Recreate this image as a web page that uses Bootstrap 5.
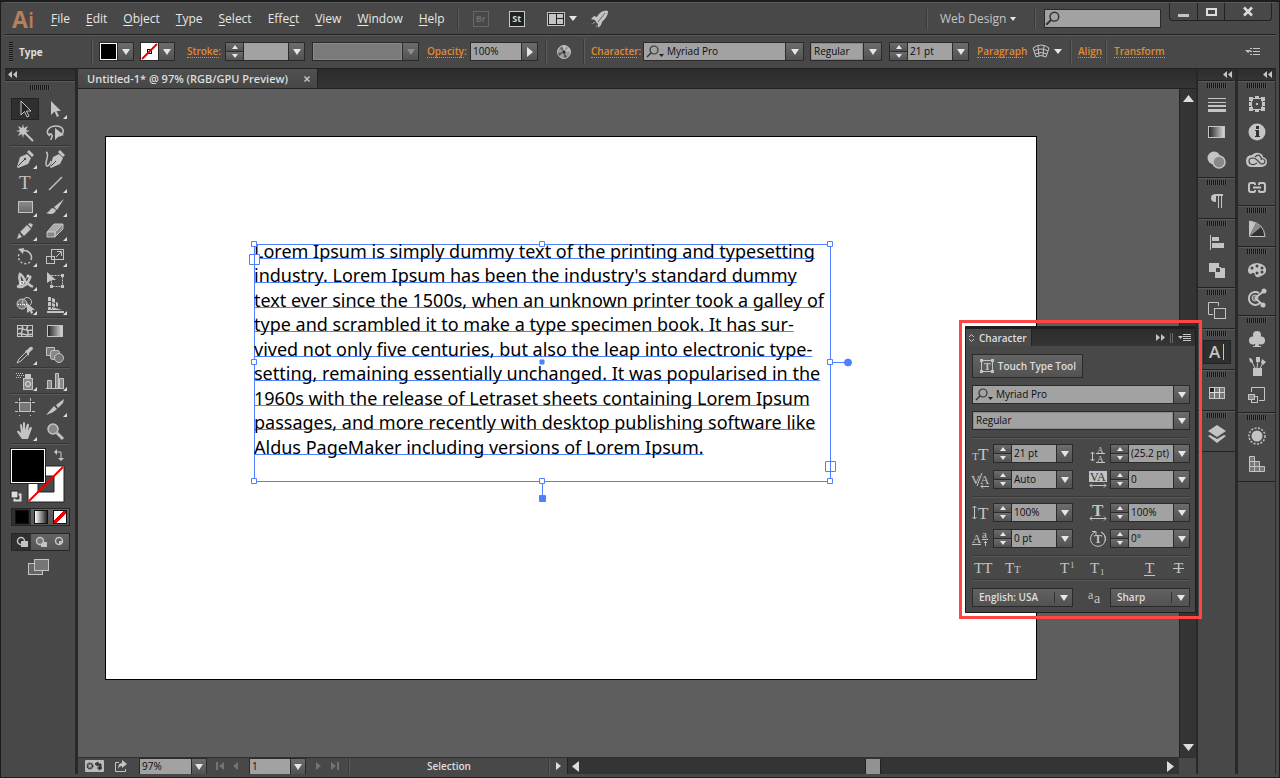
<!DOCTYPE html>
<html lang="en">
<head>
<meta charset="utf-8">
<meta name="viewport" content="width=device-width, initial-scale=1">
<title>Untitled-1 - Illustrator</title>
<link rel="stylesheet" href="https://cdn.jsdelivr.net/npm/bootstrap@5.3.0/dist/css/bootstrap.min.css">
<style>
:root{--ink:#c4c4c4;--line:#2a2a2a;--hi:#5a5a5a;--face:#484848;--field:#a2a2a2;--orange:#e28a2f;--sel:#4f80ff}
body{background:var(--face);color:#dedede;font:10px/14px "Open Sans","Noto Sans",sans-serif;overflow:hidden}
button,input,select{font:inherit;color:inherit;border:0;border-radius:0;padding:0;background:none;min-width:0}
svg{display:block;flex:none}
.ic{fill:none;stroke:var(--ink);stroke-width:1;overflow:visible}
.ic .f,.ic.f{fill:var(--ink);stroke:none}
.ic .d{fill:#8a8a8a}
.ic text{fill:var(--ink);stroke:none;font-family:"Liberation Serif",serif}
.app{border:solid #1c1c1c;border-width:2px 1px 1px 1px;padding:0 3px 3px 4px}
/* menu bar */
.menubar{height:32px;border-top:1px solid var(--hi);padding-left:7px}
.brand{font:700 23px/30px "Open Sans",sans-serif;color:#b67f5c;width:39px}
.brand span{font-weight:600;font-size:22px}
.menus{font-size:12px;gap:16px}
.menus a{color:#e6e6e6;text-decoration:none}
.menus u{text-underline-offset:2px}
.vsep{width:2px;background:#383838;border-right:1px solid #5c5c5c;flex:none}
.menubar .vsep{height:20px}
.appbox{width:16px;height:16px;border:1px solid #c8c8c8;background:#222;font:700 9px/14px "Open Sans",sans-serif;color:#d8d8d8;text-align:center}
.appbox.off{border-color:#666;background:none;color:#6c6c6c}
.workspace{font-size:12px;width:82px;appearance:none;color:#c4c4c4}
.search{width:117px;height:19px;background:var(--field);border:1px solid var(--line)}
.winbtns{border:1px solid #222;border-top:0;border-radius:0 0 4px 4px;height:18px}
.winbtns button{height:17px;border-right:1px solid #222}
.winbtns button:last-child{border:0}
/* control bar */
.control{height:35px;border-top:1px solid #222;border-bottom:1px solid #222;box-shadow:inset 0 1px 0 #5a5a5a}
.control .vsep{height:25px}
.grip-v{width:4px;height:20px;background:repeating-linear-gradient(#161616 0 1px,#555 1px 2px)}
.grip-h{width:20px;height:5px;background:repeating-linear-gradient(90deg,#161616 0 1px,#555 1px 2px)}
.toolbox .grip-h{margin:3px auto 7px}
.olink{color:var(--orange);text-decoration:none;border-bottom:1px dotted var(--orange);line-height:12px;font-weight:600;white-space:nowrap}
.olink:hover{color:#ffb060}
.combo{height:19px;border:1px solid var(--line);background:var(--line);gap:1px}
.combo input,.combo select{background:var(--field);color:#0c0c0c;height:17px;line-height:17px;padding:0 2px;flex:1 1 0;appearance:none;width:0}
.combo.listbox select{box-shadow:inset 0 0 0 1px #8c8c8c;padding-left:3px}
.combo.off input{background:#7a7a7a;box-shadow:inset 0 0 0 1px #8a8a8a}
.combo .lens{background:var(--field);padding-left:2px;margin-right:-1px}
.drop,.spin button{background:linear-gradient(#6c6c6c,#525252)}
.drop{width:15px;height:17px;display:grid;place-items:center;flex:none}
.drop.wide{width:17px}
.drop::after,.tri{content:"";border:4px solid transparent;border-top:6px solid #e6e6e6;border-bottom:0}
.drop.rt::after{border:5px solid transparent;border-left:6px solid #e6e6e6;border-right:0}
.off .drop::after{border-top-color:#8c8c8c}
.spin{width:17px;height:17px;display:grid;grid-template-rows:8px 8px;gap:1px;flex:none}
.spin button{display:grid;place-items:center}
.spin button::after{content:"";border:3px solid transparent;border-top:4px solid #e6e6e6;border-bottom:0}
.spin button:first-child::after{border-top:0;border-bottom:4px solid #e6e6e6}
.tri{width:0;height:0;border-top-width:5px}
.tri.tiny{border-width:4px 3px 0;margin-left:-8px;margin-right:2px}
.chip{width:17px;height:17px;border:1px solid #fff;background:#000}
/* toolbox */
.colhead{height:12px;background:linear-gradient(#2c2c2c,#353535);border-bottom:1px solid #222}
.toolbox{width:70px}
.toolbox .body{border-top:1px solid var(--hi)}
.tools{display:grid;grid-template-columns:30px 30px;padding:0 5px}
.tools hr{grid-column:1/3;margin:0;height:2px;border:0;background:linear-gradient(#363636 50%,#5a5a5a 50%);opacity:1}
.tool{height:24px;display:grid;place-items:center;position:relative}
.tool.on{background:#2f2f2f;box-shadow:inset 0 0 0 1px #222;height:22px;width:28px;margin:1px}
.tool.more::after{content:"";position:absolute;right:3px;bottom:2px;border:2px solid transparent;border-right-color:#ddd;border-bottom-color:#ddd}
.swatches{height:60px;margin:3px 5px 0}
.seg{display:grid;grid-template-columns:repeat(3,1fr);margin:0 6px 7px 6px;height:18px;width:59px;border:1px solid #262626;background:linear-gradient(#636363,#565656)}
.seg button{display:grid;place-items:center}
.seg button.on{background:#303030}
.seg i{width:14px;height:14px;border:1px solid #111;display:block}
.edge{width:2px;background:#282828;flex:none}
.edge.first{width:3px}
/* document */
.tabs{height:20px;background:linear-gradient(#2c2c2c,#353535);border-bottom:1px solid #222}
.doctab{background:linear-gradient(#505050,#474747);border-right:1px solid #222;font-size:11px;font-weight:600;padding:0 6px 0 9px;width:240px}
.canvas{background:#5e5e5e;min-height:0}
.artboard{background:#fff;margin:48px 143px 78px 28px;outline:1px solid #000;position:relative}
.textframe{position:absolute;left:148px;top:107px;width:577px;height:238px;border:1px solid var(--sel)}
.lines{height:220px;margin:-4px 0 0 -1px;color:#000;font-family:"Noto Sans","Open Sans",sans-serif;font-size:18px;line-height:20px;white-space:nowrap}
.lines span{flex:1 1 0;align-self:flex-start;text-decoration:underline 1px var(--sel);text-underline-offset:0;text-decoration-skip-ink:none}
.handles{position:absolute;left:-7px;top:-4px;overflow:visible}
.vscroll{width:17px;background:#343434;border-left:1px solid #222;padding:6px 0}
.status{height:17px;border-top:1px solid #303030}
.status .combo{height:16px;border-bottom:0}
.status .combo input,.status .drop{height:15px;line-height:15px}
.status .drop{width:14px}
.hscroll{background:#343434;border-left:1px solid #222;padding:0 5px 0 4px}
.thumb{width:16px;height:15px;background:#929292;border:solid #222;border-width:0 1px}
/* docks */
.dock{width:38px;border-right:1px solid #2a2a2a}
.dgroup{border-bottom:1px solid #222;padding:2px 0 1px;box-shadow:inset 0 1px 0 var(--hi)}
.dgroup .grip-h{margin:0 auto 4px}
.dgroup button{display:grid;place-items:center;width:28px;height:24px;margin:0 auto 4px}
.dgroup button.on{background:#2f2f2f;border:1px solid #222}
/* character panel */
.callout{position:absolute;right:77px;top:318px;width:243px;border:3px solid #ff4545;padding:3px;background:linear-gradient(90deg,#fff 0 2px,transparent 2px)}
.panel{background:var(--face);border:1px solid #1e1e1e;border-top:3px solid #1e1e1e}
.ptabs{height:17px;background:linear-gradient(#2c2c2c,#353535)}
.ptab{background:#4b4b4b;width:66px;border-right:1px solid #222;font-weight:600}
.pbody{padding:8px 5px 5px 6px}
.pbody hr{margin:0;height:2px;border:0;background:linear-gradient(#383838 50%,#585858 50%);opacity:1}
.pgrid{display:grid;grid-template-columns:21px 80px 16px 21px 80px;align-items:center;row-gap:7px;padding:5px 0 7px}
.touch{height:24px;width:111px;background:linear-gradient(#646464,#525252);border:1px solid #2a2a2a;font-weight:600;white-space:nowrap;padding:0 6px}
.pick{height:19px;border:1px solid #2a2a2a;background:linear-gradient(#626262,#525252);position:relative}
.pick select{width:100%;height:17px;appearance:none;font-weight:600;padding-left:6px;line-height:17px;display:block}
.pick::after{content:"";position:absolute;right:4px;top:6px;border:4px solid transparent;border-top:6px solid #e6e6e6;border-bottom:0;pointer-events:none}
.pick::before{content:"";position:absolute;right:17px;top:3px;height:11px;border-left:1px solid #333;pointer-events:none}
.typebtns{height:22px;padding:0 2px}
</style>
</head>
<body>
<svg width="0" height="0" class="position-absolute" aria-hidden="true">
<defs>
<linearGradient id="gm"><stop offset="0" stop-color="#222"/><stop offset="1" stop-color="#ddd"/></linearGradient>
<linearGradient id="gv" x2="0" y2="1"><stop offset="0" stop-color="#8c8c8c"/><stop offset="1" stop-color="#686868"/></linearGradient>
<symbol id="lens" viewBox="0 0 12 12"><circle cx="7.500" cy="4.500" r="3.500" fill="none" stroke="#333" stroke-width="1.200"/><path d="M5 7L1 11" stroke="#333" stroke-width="1.500"/></symbol>
<symbol id="lensd" viewBox="0 0 19 13"><circle cx="8" cy="5" r="4" fill="none" stroke="#333" stroke-width="1.200"/><path d="M5 8L1 12" stroke="#333" stroke-width="1.500"/><path d="M13 9h5l-2.500 3z" fill="#222"/></symbol>
</defs>
</svg>

<div class="app d-flex flex-column vh-100 position-relative">

<header class="menubar d-flex align-items-center">
  <div class="brand">A<span>i</span></div>
  <nav class="menus d-flex align-items-center">
    <a href="#"><u>F</u>ile</a><a href="#"><u>E</u>dit</a><a href="#"><u>O</u>bject</a><a href="#"><u>T</u>ype</a><a href="#"><u>S</u>elect</a><a href="#">Effe<u>c</u>t</a><a href="#"><u>V</u>iew</a><a href="#"><u>W</u>indow</a><a href="#"><u>H</u>elp</a>
  </nav>
  <div class="vsep" style="margin-left:12px"></div>
  <button class="appbox off" style="margin-left:14px">Br</button>
  <button class="appbox" style="margin:0 22px 0 20px">St</button>
  <button class="d-flex align-items-center gap-1" aria-label="Arrange documents">
    <svg width="18" height="14" class="ic"><rect x=".5" y=".5" width="17" height="13" fill="#222"/><path class="f" d="M2 2h7v10H2zM10 2h6v4h-6zM10 7h6v5h-6z"/></svg>
    <span class="tri"></span></button>
  <button style="margin-left:13px" aria-label="GPU performance">
    <svg width="19" height="18" class="ic f"><path d="M18 1C13 0 9 3 7 7L4 6 1 9l4 1 1 2 2 2 0 4 3-3 1-3C15 9 18 6 18 1zM5 12L1 14l4-1zM7 15l-2 3 3-3z"/><path d="M15 3L8 12" stroke="#666"/></svg></button>
  <div class="vsep ms-auto me-2"></div>
  <label class="d-flex align-items-center me-3"><select class="workspace ps-1" aria-label="Workspace"><option>Web Design</option></select><span class="tri tiny"></span></label>
  <div class="vsep me-2"></div>
  <label class="search d-flex align-items-center"><svg width="15" height="15"><use href="#lens"/></svg><input type="search" class="w-100" aria-label="Search"></label>
  <div class="winbtns d-flex align-self-start ms-2 me-1">
    <button style="width:28px" aria-label="Minimize"><svg width="26" height="14" class="ic f"><path d="M8 9h11v3H8z"/></svg></button>
    <button style="width:27px" aria-label="Maximize"><svg width="26" height="14" class="ic"><rect x="9" y="4" width="9" height="6" stroke="#ddd" stroke-width="2"/></svg></button>
    <button style="width:46px" aria-label="Close"><svg width="46" height="14" class="ic"><path d="M19 2.500l8 8M27 2.500l-8 8" stroke="#ddd" stroke-width="2.500"/></svg></button>
  </div>
</header>

<section class="control d-flex align-items-center" aria-label="Control">
  <div class="grip-v ms-1"></div>
  <div class="fw-bold" style="width:78px;padding-left:6px">Type</div>
  <div class="vsep"></div>
  <div class="combo d-flex" style="width:35px;margin-left:6px"><button class="chip" aria-label="Fill"></button><button class="drop" aria-label="Fill options"></button></div>
  <div class="combo d-flex" style="width:35px;margin-left:6px"><button aria-label="Stroke"><svg width="17" height="17"><path fill="#fff" d="M0 0h17v17H0z"/><rect x="6.500" y="6.500" width="4" height="4" fill="none" stroke="#000"/><path d="M1 16L16 1" stroke="#e00" stroke-width="2"/></svg></button><button class="drop" aria-label="Stroke options"></button></div>
  <a href="#" class="olink" style="margin-left:12px;width:32px">Stroke:</a>
  <div class="combo d-flex" style="width:80px;margin-left:6px"><span class="spin"><button aria-label="More"></button><button aria-label="Less"></button></span><input aria-label="Stroke weight"><button class="drop" aria-label="Weights"></button></div>
  <div class="combo off d-flex" style="width:107px;margin-left:7px"><input disabled aria-label="Profile"><button class="drop" disabled aria-label="Profiles"></button></div>
  <a href="#" class="olink ms-2" style="width:37px">Opacity:</a>
  <div class="combo d-flex" style="width:68px;margin-left:6px"><input value="100%" aria-label="Opacity"><button class="drop rt" aria-label="Opacity slider"></button></div>
  <div class="vsep" style="margin-left:7px"></div>
  <button style="margin:0 11px 0 9px" aria-label="Recolor artwork"><svg width="16" height="16" class="ic"><circle cx="8" cy="8" r="6.500" fill="#9a9a9a"/><path class="f" d="M8 8L7 2h3zM8 8l5-4 1 3z" fill="#ddd"/><path d="M8 8l-6 1 1 3zM8 8l-2-5-2 1zM8 8l0 6 3-1z" fill="#555" stroke="none"/><circle cx="8" cy="8" r="1.500" fill="#222" stroke="none"/></svg></button>
  <div class="vsep"></div>
  <a href="#" class="olink" style="margin-left:6px;width:46px">Character:</a>
  <div class="combo d-flex" style="width:161px;margin-left:6px"><span class="lens d-flex align-items-center"><svg width="19" height="13"><use href="#lensd"/></svg></span><input value="Myriad Pro" aria-label="Font family"><button class="drop wide" aria-label="Families"></button></div>
  <label class="combo listbox d-flex" style="width:72px;margin-left:6px"><select aria-label="Font style"><option>Regular</option></select><span class="drop wide"></span></label>
  <div class="combo d-flex" style="width:80px;margin-left:7px"><span class="spin"><button aria-label="Larger"></button><button aria-label="Smaller"></button></span><input value="21 pt" aria-label="Font size"><button class="drop" aria-label="Sizes"></button></div>
  <a href="#" class="olink ms-2" style="width:46px">Paragraph</a>
  <button class="d-flex align-items-center gap-1" style="margin:0 8px 0 9px" aria-label="Envelope"><svg width="18" height="15" class="ic"><path d="M1 4Q9-2 17 4L14 13Q9 10 4 13zM6 2l1 10M12 2l-1 10M2 7q7-4 14 0M3 10q6-3 12 0"/></svg><span class="tri"></span></button>
  <div class="vsep"></div>
  <a href="#" class="olink" style="margin-left:6px;width:23px">Align</a>
  <div class="vsep ms-1"></div>
  <a href="#" class="olink" style="margin-left:7px">Transform</a>
  <button class="ms-auto me-3" aria-label="Panel menu"><svg width="15" height="10" class="ic"><path class="f" d="M0 3h6L3 6z"/><path d="M5 1.500h2M8 1.500h7M5 4.500h2M8 4.500h7M5 7.500h2M8 7.500h7"/></svg></button>
</section>

<main class="d-flex flex-grow-1" style="min-height:0">

<aside class="toolbox flex-shrink-0" aria-label="Tools">
  <div class="colhead"><svg width="20" height="10" class="ic f"><path d="M7 2v7L3 5.500zM12 2v7L8 5.500z"/></svg></div>
  <div class="body">
    <div class="grip-h"></div>
    <div class="tools">
      <button class="tool on" aria-label="Selection"><svg width="20" height="20" class="ic"><path d="M6 2v14l3.500-3.500L12 18l2-1-2.500-5H16z" fill="#222"/></svg></button>
      <button class="tool more" aria-label="Direct selection"><svg width="20" height="20" class="ic f"><path d="M6 2v14l3.500-3.500L12 18l2-1-2.500-5H16z"/></svg></button>
      <button class="tool" aria-label="Magic wand"><svg width="20" height="20" class="ic"><path class="f" d="M8 1l1 4 4-2-2 4 4 1-4 1 2 4-4-2-1 4-1-4-4 2 2-4-4-1 4-1-2-4 4 2z"/><path d="M10 10l8 8" stroke-width="2"/></svg></button>
      <button class="tool" aria-label="Lasso"><svg width="20" height="20" class="ic"><path d="M5 13C-1 9 4 3 11 3s10 6 4 9M5 13c-2-2 1-3 2-1s-1 2-1 5" stroke-width="1.500"/><path class="f" d="M10 5v12l3-3 6-2z"/></svg></button>
      <hr>
      <button class="tool more" aria-label="Pen"><svg width="20" height="20" class="ic"><path class="f" d="M2 18L5 8l7-3 4 4-3 6-10 4zM12 3l2-2 5 5-2 2z"/><path d="M3 17l6-6" stroke="#444"/><circle cx="10" cy="10" r="1.200" fill="#444" stroke="none"/></svg></button>
      <button class="tool" aria-label="Curvature"><svg width="20" height="20" class="ic"><path class="f" d="M5 18L8 8l6-3 4 4-3 6-9 4zM13 3l2-2 5 5-2 2z"/><path d="M6 17l5-5" stroke="#444"/><path d="M1 3c5 2-3 12 1 14 2 0 3-2 4-5" stroke-width="1.500"/></svg></button>
      <button class="tool more" aria-label="Type"><svg width="20" height="20" class="ic"><text x="4" y="16" font-size="19">T</text></svg></button>
      <button class="tool more" aria-label="Line"><svg width="20" height="20" class="ic"><path d="M4 17L17 4" stroke-width="1.500"/></svg></button>
      <button class="tool more" aria-label="Rectangle"><svg width="20" height="20" class="ic"><rect x="3.500" y="4.500" width="14" height="11" fill="url(#gv)"/></svg></button>
      <button class="tool more" aria-label="Paintbrush"><svg width="20" height="20" class="ic f"><path d="M19 2L9 10l3 3zM8 11c-3 0-3 4-7 5 5 2 9 1 10-3z"/></svg></button>
      <button class="tool more" aria-label="Pencil"><svg width="20" height="20" class="ic"><path class="f" d="M2 18l2-6 3 4zM5 11l7-7 4 4-7 7z"/><path class="f" d="M13 3q3-2 5 1l-2 3z"/><path d="M13 4l4 4M5 11l3 4" stroke="#555"/></svg></button>
      <button class="tool more" aria-label="Eraser"><svg width="20" height="20" class="ic"><path d="M9 3h9l-8 8H2z" fill="#aaa"/><path d="M2 11h8v5H2zM10 11l8-8v5l-8 8z" fill="#888"/></svg></button>
      <hr>
      <button class="tool more" aria-label="Rotate"><svg width="20" height="20" class="ic"><path d="M7 4a7 7 0 0 1 9 9" stroke-width="1.500"/><path d="M15 15a7 7 0 0 1-11-8" stroke-width="1.500" stroke-dasharray="2 2"/><path class="f" d="M3 2l6-1-1 6z"/></svg></button>
      <button class="tool more" aria-label="Scale"><svg width="20" height="20" class="ic"><rect x="6.500" y="2.500" width="12" height="10"/><rect x="1.500" y="9.500" width="8" height="7"/><path d="M11 10l5-5M12 4.500h4.500V9"/></svg></button>
      <button class="tool more" aria-label="Width"><svg width="20" height="20" class="ic"><path d="M2 16c3-1 4-3 3-6-1-3-1-5 0-7 4 2 4 6 6 9 3 0 3-5 5-7M4 16c5 1 6-4 9-3 2 0 2 3 5 2" stroke-width="2.500"/><path d="M4 16L13 5" /><circle cx="7" cy="12" r="1.500" stroke="#fff" fill="#666"/><circle cx="13" cy="5" r="1" stroke="#fff" fill="#666"/></svg></button>
      <button class="tool" aria-label="Free transform"><svg width="20" height="20" class="ic"><rect x="6.500" y="4.500" width="11" height="11" stroke-dasharray="2 1"/><path class="f" d="M2 1v11l3-2 3-1h3zM16 3h3v3h-3zM16 14h3v3h-3zM5 14h3v3H5z"/></svg></button>
      <button class="tool more" aria-label="Shape builder"><svg width="20" height="20" class="ic"><circle cx="7" cy="9" r="5" fill="#777"/><circle cx="12" cy="7" r="4.500"/><path d="M3 9.500h10" stroke="#fff" stroke-dasharray="1 1"/><path class="f" d="M12 8v10l3-2 1 3 2-1-1-3h3z"/></svg></button>
      <button class="tool more" aria-label="Perspective grid"><svg width="20" height="20" class="ic f"><path d="M3 2h3v4H3zM7 3l3 1v4L7 7zM3 7h3v4H3zM7 8l3 1v3L7 11zM11 7l2 1v4l-2-1zM3 12h3v2H3zM7 12l10 3H3v-1h4zM2 16h17v2H2z"/></svg></button>
      <hr>
      <button class="tool" aria-label="Mesh"><svg width="20" height="20" class="ic"><rect x="2.500" y="4.500" width="15" height="11"/><path d="M3 8c6-2 6 3 14 1M3 13c4-2 9 3 14 0M7 5c3 4-3 6 0 10M13 5c-4 4 3 6-1 10" stroke-width="1.500"/></svg></button>
      <button class="tool" aria-label="Gradient"><svg width="20" height="20" class="ic"><rect x="2.500" y="4.500" width="15" height="11" fill="url(#gm)"/></svg></button>
      <button class="tool more" aria-label="Eyedropper"><svg width="20" height="20" class="ic"><path class="f" d="M10 6l2-1 3-3q3-1 3 2l-4 4v3z"/><path d="M11 7l-7 7-2 4 4-2 7-7"/></svg></button>
      <button class="tool" aria-label="Blend"><svg width="20" height="20" class="ic"><path d="M1.500 2.500h8v8h-8z" fill="#777"/><rect x="5.500" y="5.500" width="9" height="9" rx="2" fill="#888"/><circle cx="14" cy="13" r="4.500" fill="#777"/></svg></button>
      <hr>
      <button class="tool more" aria-label="Symbol sprayer"><svg width="20" height="20" class="ic"><rect x="8.500" y="7.500" width="9" height="11" fill="#888"/><circle cx="13" cy="13" r="2.500" stroke="#eee"/><path class="f" d="M10 3h6v4h-6z"/><path d="M1 2.500h8M2 4.500h7M1 6.500h5" stroke-dasharray="1 1"/></svg></button>
      <button class="tool more" aria-label="Column graph"><svg width="20" height="20" class="ic"><path d="M2.500 9.500h4v8h-4zM10.500 2.500h3v15h-3zM14.500 7.500h4v10h-4zM1 17.500h18" fill="#888"/></svg></button>
      <hr>
      <button class="tool" aria-label="Artboard"><svg width="20" height="20" class="ic"><rect x="4.500" y="5.500" width="11" height="9" fill="#777"/><path d="M4.500 1v18M15.500 1v18M0 5.500h20M0 14.500h20" stroke-dasharray="3 14 3 0"/></svg></button>
      <button class="tool more" aria-label="Slice"><svg width="20" height="20" class="ic f"><path d="M1 18L9 9l3 3c-3 3-6 4-11 6zM11 8l8-6-1 4-5 5z"/></svg></button>
      <button class="tool more" aria-label="Hand"><svg width="20" height="20" class="ic f"><path d="M7 18L2 11q0-2 2-1l2 2-1-8q1-2 2 0l1 5V2q1-2 2 0v7l2-6q2-1 2 1l-1 6 2-4q2 0 2 1l-3 8-1 3z"/></svg></button>
      <button class="tool" aria-label="Zoom"><svg width="20" height="20" class="ic"><circle cx="8" cy="8" r="5" fill="#888" stroke-width="1.500"/><path d="M12 12l6 6" stroke-width="3"/></svg></button>
      <hr>
    </div>
    <div class="swatches">
      <svg width="60" height="56" viewBox="0 0 60 56">
        <path d="M18 18h36v36H18zM28 28v16h16V28z" fill="#fff" fill-rule="evenodd" stroke="#222"/><path d="M19 53L53 19" stroke="#e00" stroke-width="2"/>
        <rect x=".5" y=".5" width="35" height="35" fill="#000" stroke="#222"/><rect x="1.500" y="1.500" width="33" height="33" fill="#000" stroke="#fff"/>
        <path d="M46 4h5v7" fill="none" stroke="#c4c4c4"/><path d="M47 1v6l-3-3zM48 10h6l-3 3z" fill="#c4c4c4"/>
        <rect x="4.500" y="46.500" width="6" height="6" fill="none" stroke="#ddd" stroke-width="2"/><rect x="1" y="43" width="7" height="7" fill="#ddd" stroke="#222"/>
      </svg>
    </div>
    <div class="seg"><button class="on" aria-label="Color"><i style="background:#000"></i></button><button aria-label="Gradient"><i style="background:linear-gradient(90deg,#fff,#222)"></i></button><button aria-label="None"><i style="background:linear-gradient(to bottom right,#fff 38%,#e00 38% 62%,#fff 62%)"></i></button></div>
    <div class="seg">
      <button class="on" aria-label="Draw normal"><svg width="14" height="12" class="ic"><circle cx="6" cy="5" r="3.500" stroke-width="1.500"/><path class="f" d="M6 5h7v6H6z"/></svg></button>
      <button aria-label="Draw behind"><svg width="14" height="12" class="ic"><path class="f" d="M7 6h6v5H7z"/><circle cx="6" cy="5" r="3.500" fill="#777" stroke-width="1.500"/></svg></button>
      <button aria-label="Draw inside"><svg width="14" height="12" class="ic"><circle cx="6" cy="5" r="3.500" stroke-width="1.500"/><path class="f" d="M6 5h4v1l-4 3z"/></svg></button>
    </div>
    <button class="d-block" style="margin-left:23px" aria-label="Screen mode"><svg width="22" height="18" class="ic"><rect x=".5" y="5.500" width="14" height="11" fill="#666"/><rect x="6.500" y="1.500" width="14" height="11" fill="#777"/></svg></button>
  </div>
</aside>
<div class="edge first"></div>

<section class="d-flex flex-column flex-grow-1" style="min-width:0">
  <div class="tabs d-flex">
    <div class="doctab d-flex align-items-center justify-content-between"><span>Untitled-1* @ 97% (RGB/GPU Preview)</span><button aria-label="Close tab"><svg width="8" height="8" class="ic"><path d="M1.500 1.500l5 5M6.500 1.500l-5 5" stroke-width="1.500"/></svg></button></div>
  </div>
  <div class="d-flex flex-grow-1" style="min-height:0">
    <div class="canvas flex-grow-1 d-flex">
      <div class="artboard flex-grow-1">
        <div class="textframe">
          <div class="lines d-flex flex-column">
            <span>Lorem Ipsum is simply dummy text of the printing and typesetting</span>
            <span>industry. Lorem Ipsum has been the industry's standard dummy</span>
            <span>text ever since the 1500s, when an unknown printer took a galley of</span>
            <span>type and scrambled it to make a type specimen book. It has sur-</span>
            <span>vived not only five centuries, but also the leap into electronic type-</span>
            <span>setting, remaining essentially unchanged. It was popularised in the</span>
            <span>1960s with the release of Letraset sheets containing Lorem Ipsum</span>
            <span>passages, and more recently with desktop publishing software like</span>
            <span>Aldus PageMaker including versions of Lorem Ipsum.</span>
          </div>
          <svg class="handles" width="600" height="262" fill="#fff" stroke="#4f80ff">
            <path d="M583 121.500h17M294.500 240v18"/>
            <path d="M1.500 13.500h10v10h-10zM577.500 220.500h10v10h-10z"/><path d="M6.500 13v11M582.500 220v11"/>
            <path d="M3.500 .5h5v5h-5zM291.500 .5h5v5h-5zM579.500 .5h5v5h-5zM3.500 118.500h5v5h-5zM579.500 118.500h5v5h-5zM3.500 237.500h5v5h-5zM291.500 237.500h5v5h-5zM579.500 237.500h5v5h-5z"/>
            <path d="M292 119h4v4h-4zM291.500 254.500h6v6h-6z" fill="#4f80ff"/><circle cx="600" cy="121.500" r="3.500" fill="#4f80ff"/>
          </svg>
        </div>
      </div>
    </div>
    <div class="vscroll d-flex flex-column justify-content-between align-items-center">
      <svg width="11" height="7" fill="#ddd"><path d="M5.500 0L11 7H0z"/></svg>
      <svg width="11" height="7" fill="#ddd"><path d="M0 0h11L5.500 7z"/></svg>
    </div>
  </div>
  <footer class="status d-flex align-items-center">
    <button style="margin-left:7px" aria-label="Sync settings"><svg width="19" height="12"><rect width="19" height="12" rx="1" fill="#bbb"/><circle cx="5" cy="6" r="2.500" fill="none" stroke="#333" stroke-width="2" stroke-dasharray="1.500 .5"/><path d="M10 4l3-2v4zM12 4h4v3M17 8l-3 2V6zM15 8h-3" stroke="#333" fill="#333"/></svg></button>
    <button style="margin:0 11px 0 10px" aria-label="Share"><svg width="14" height="12" class="ic"><path d="M5 2.500H1.500v9h10V9"/><path class="f" d="M8 0l5 4-5 4V6Q5 6 4 9 4 3 8 3z"/></svg></button>
    <div class="combo d-flex" style="width:68px"><input value="97%" aria-label="Zoom"><button class="drop" aria-label="Zoom levels"></button></div>
    <svg width="42" height="10" fill="#737373"><path d="M9 1h2v8H9zM17 1v8l-5-4zM31 1v8l-5-4z"/></svg>
    <div class="combo d-flex" style="width:57px"><input value="1" aria-label="Artboard number"><button class="drop" aria-label="Artboards"></button></div>
    <svg width="42" height="10" fill="#737373"><path d="M10 1v8l5-4zM25 1v8l5-4zM31 1h2v8h-2z"/></svg>
    <div class="vsep h-100"></div>
    <div class="fw-semibold text-center" style="width:198px">Selection</div>
    <div class="vsep h-100"></div>
    <svg width="17" height="12" fill="#ddd"><path d="M6 2v8l5-4z"/></svg>
    <div class="hscroll h-100 d-flex flex-grow-1 align-items-center justify-content-between">
      <svg width="7" height="11" fill="#ddd"><path d="M7 0v11L0 5.500z"/></svg>
      <div class="thumb"></div>
      <svg width="7" height="11" fill="#ddd"><path d="M0 0v11l7-5.500z"/></svg>
    </div>
    <div style="width:17px"></div>
  </footer>
</section>
<div class="edge"></div>

<aside class="dock flex-shrink-0" aria-label="Panels">
  <div class="colhead d-flex justify-content-end"><svg width="13" height="10" class="ic f"><path d="M5 2v7L1 5.500zM10 2v7L6 5.500z"/></svg></div>
  <div class="dgroup"><div class="grip-h"></div>
    <button aria-label="Stroke"><svg width="20" height="20" class="ic"><path d="M1 4.500h18M1 8.500h18" /><path d="M1 12h18" stroke-width="2"/><path d="M1 16.500h18" stroke-width="3"/></svg></button>
    <button aria-label="Gradient"><svg width="20" height="20" class="ic"><rect x="1.500" y="4.500" width="16" height="11" fill="url(#gm)"/></svg></button>
    <button aria-label="Transparency"><svg width="20" height="20" class="ic"><circle class="f" cx="7" cy="8" r="6.500"/><circle cx="12" cy="12" r="6" fill="#888" stroke-width="1.500"/></svg></button></div>
  <div class="dgroup"><div class="grip-h"></div>
    <button aria-label="Paragraph"><svg width="20" height="20" class="ic"><path class="f" d="M9 3h7v2H9v6Q4 11 4 7t5-4z"/><path d="M11.500 4v13M14.500 4v13"/></svg></button></div>
  <div class="dgroup"><div class="grip-h"></div>
    <button aria-label="Align"><svg width="20" height="20" class="ic"><path d="M3.500 3v15"/><path class="f" d="M5 5h7v4H5zM5 11h12v5H5z"/></svg></button>
    <button aria-label="Pathfinder"><svg width="20" height="20" class="ic"><path class="f" d="M2 3h10v4H8v5H2zM13 8h5v10H8v-5h5z"/><rect x="8.500" y="7.500" width="5" height="5"/></svg></button></div>
  <div class="dgroup"><div class="grip-h"></div>
    <button aria-label="Artboards"><svg width="20" height="20" class="ic"><path d="M6 13.500H1.500v-12h10V5"/><rect x="7.500" y="7.500" width="11" height="10"/></svg></button></div>
  <div class="dgroup"><div class="grip-h"></div>
    <button class="on" aria-label="Character"><svg width="20" height="20" class="ic"><text x="2" y="16" font-size="17" style="font-family:'Open Sans';font-weight:600">A</text><path d="M16.500 2v16"/></svg></button></div>
  <div class="dgroup"><div class="grip-h"></div>
    <button aria-label="Swatches"><svg width="20" height="20" class="ic"><rect x="2.500" y="4.500" width="15" height="11" fill="#777"/><path fill="#222" stroke="none" d="M3 5h4v5H3z"/><path d="M7.500 5v10M12.500 5v10M3 9.500h14" stroke="#ddd"/></svg></button></div>
  <div class="dgroup"><div class="grip-h"></div>
    <button aria-label="Layers"><svg width="20" height="20" class="ic f"><path d="M10 1l9 6-9 6-9-6zM1 12l2-1 7 4 7-4 2 1-9 7z"/></svg></button></div>
</aside>
<div class="edge"></div>
<aside class="dock flex-shrink-0" aria-label="More panels">
  <div class="colhead d-flex justify-content-end"><svg width="13" height="10" class="ic f"><path d="M5 2v7L1 5.500zM10 2v7L6 5.500z"/></svg></div>
  <div class="dgroup"><div class="grip-h"></div>
    <button aria-label="Transform"><svg width="20" height="20" class="ic"><rect x="4.500" y="4.500" width="11" height="11"/><path class="f" d="M2 3h4v4H2zM8 2h4v3H8zM14 3h4v4h-4zM2 13h4v4H2zM8 15h4v3H8zM14 13h4v4h-4zM2 8h2v4H2zM16 8h2v4h-2zM9 9h2v2H9z"/></svg></button>
    <button aria-label="Info"><svg width="20" height="20" class="ic"><circle class="f" cx="10" cy="10" r="8.500"/><path d="M9 4h3v3H9zM8 8h4v6h1v1H8v-1h1V9H8z" fill="#333" stroke="none"/></svg></button>
    <button aria-label="Libraries"><svg width="22" height="18" class="ic"><path class="f" d="M6 16Q0 16 0 10T6 4Q9 1 13 2q4 1 4 4 4 1 4 5t-5 5z"/><path d="M11 12Q8 14 6 13.500 3 13 3 10t4-3q2 0 4 2l4 4q4 0 4-2.500t-4-3M9 6q3-3 5-1t1 4" stroke="#444" stroke-width="1.200"/></svg></button>
    <button aria-label="Links"><svg width="20" height="20" class="ic"><path d="M8 7V6Q8 5 7 5H4Q2 5 2 7v5q0 2 2 2h3q1 0 1-1v-1M12 7V6q0-1 1-1h3q2 0 2 2v5q0 2-2 2h-3q-1 0-1-1v-1M6 9.500h8" stroke-width="2"/></svg></button></div>
  <div class="dgroup"><div class="grip-h"></div>
    <button aria-label="Color guide"><svg width="20" height="20" class="ic"><path d="M2.500 2v15.500H18Q17 4 2.500 2z" fill="#333"/><path class="f" d="M2 2v16L9 4z"/><path class="f d" d="M2 18L9 4l5 4z"/></svg></button></div>
  <div class="dgroup"><div class="grip-h"></div>
    <button aria-label="Color"><svg width="20" height="20" class="ic"><path class="f" d="M4 14Q7 11 8 15t6 1q6-2 5-7T10 3Q1 4 1 10q0 4 3 4z"/><g fill="#444" stroke="none"><circle cx="5" cy="8" r="1.500"/><circle cx="10" cy="6" r="1.500"/><circle cx="15" cy="8" r="1.500"/><circle cx="15" cy="12" r="1.500"/><circle cx="10" cy="13" r="1.500"/></g></svg></button>
    <button aria-label="Asset sharing"><svg width="20" height="20" class="ic"><circle cx="8" cy="10" r="3" fill="#777"/><path d="M13 15A6.500 6.500 0 1 1 12 5M8 10l9-7M8 10l8 7" stroke-width="2"/><circle class="f" cx="17" cy="3" r="2.500"/><circle class="f" cx="16" cy="17" r="2.500"/></svg></button></div>
  <div class="dgroup"><div class="grip-h"></div>
    <button aria-label="Symbols"><svg width="20" height="20" class="ic f"><circle cx="10" cy="6" r="4"/><circle cx="6" cy="11.500" r="4"/><circle cx="14" cy="11.500" r="4"/><path d="M9 9h2l1 8h2v1H6v-1h2z"/></svg></button>
    <button aria-label="Brushes"><svg width="20" height="20" class="ic"><path class="f" d="M6 11h9v8H6z"/><path d="M8 11L4 3M10 11l1-8M13 11l3-5"/><path class="f" d="M2 1q4 0 4 5L3 5zM9 0h4v5H9zM15 2l4 3-3 3-2-2z"/></svg></button>
    <button aria-label="Graphic styles"><svg width="20" height="20" class="ic"><path d="M4.500 7V2.500h13v13H12"/><rect x="4.500" y="11.500" width="6" height="6"/><rect x="1.500" y="9.500" width="6" height="5" fill="#888"/></svg></button></div>
  <div class="dgroup"><div class="grip-h"></div>
    <button aria-label="Appearance"><svg width="20" height="20" class="ic"><circle class="f" cx="10" cy="10" r="5.500"/><circle cx="10" cy="10" r="8" stroke-dasharray="2 1.500" stroke-width="1.500"/></svg></button>
    <button aria-label="Image trace"><svg width="20" height="20" class="ic"><path d="M2.500 2.500h5v5h5v5h5v5h-15zM2.500 7.500h5v10M2.500 12.500h10v5" fill="#777"/></svg></button></div>
</aside>
</main>

<section class="callout" aria-label="Character panel">
 <div class="panel">
  <div class="ptabs d-flex align-items-center">
    <div class="ptab h-100 d-flex align-items-center"><svg width="13" height="10" class="ic"><path d="M3 4l2.500-2.500L8 4M3 6l2.500 2.500L8 6"/></svg>Character</div>
    <svg width="42" height="12" class="ic ms-auto"><path class="f" d="M3 2v7l4-3.500zM8 2v7l4-3.500z"/><path d="M17.500 1v10M19.500 1v10" stroke="#666"/><path class="f" d="M25 4h5l-2.500 3z"/><path d="M30 2.500h8M30 4.500h8M30 6.500h8M30 8.500h8"/></svg>
  </div>
  <div class="pbody">
    <button class="touch d-flex align-items-center justify-content-between"><svg width="16" height="16" class="ic"><path d="M2.500 2v12M13.500 2v12M2 2.500h12M2 13.500h12"/><path class="f" d="M1 1h3v3H1zM12 1h3v3h-3zM1 12h3v3H1zM12 12h3v3h-3z"/><text x="5" y="12" font-size="10">T</text></svg>Touch Type Tool</button>
    <div class="combo d-flex" style="margin-top:7px"><span class="lens d-flex align-items-center"><svg width="19" height="13"><use href="#lensd"/></svg></span><input value="Myriad Pro" aria-label="Font family"><button class="drop" aria-label="Families"></button></div>
    <label class="combo listbox d-flex" style="margin:7px 0"><select aria-label="Font style"><option>Regular</option></select><span class="drop"></span></label>
    <hr>
    <div class="pgrid">
      <svg width="18" height="16" class="ic"><text x="0" y="14" font-size="11">T</text><text x="6" y="14" font-size="17">T</text></svg>
      <div class="combo d-flex"><span class="spin"><button aria-label="Larger"></button><button aria-label="Smaller"></button></span><input value="21 pt" aria-label="Size"><button class="drop" aria-label="Sizes"></button></div><i></i>
      <svg width="18" height="18" class="ic"><text x="8" y="8" font-size="9">A</text><text x="8" y="17" font-size="9">A</text><path d="M7 17.500h9M7 8.500h9M3.500 7v9M1.500 9l2-2 2 2M1.500 14l2 2 2-2"/></svg>
      <div class="combo d-flex"><span class="spin"><button aria-label="More"></button><button aria-label="Less"></button></span><input value="(25.2 pt)" aria-label="Leading"><button class="drop" aria-label="Leadings"></button></div>
      <svg width="18" height="16" class="ic"><text x="-1" y="12" font-size="13">V</text><text x="8" y="12" font-size="13">A</text><path d="M5 14l5-13M9 14.500h8M11 12.500l-2 2 2 2"/></svg>
      <div class="combo d-flex"><span class="spin"><button aria-label="More"></button><button aria-label="Less"></button></span><input value="Auto" aria-label="Kerning"><button class="drop" aria-label="Kernings"></button></div><i></i>
      <svg width="18" height="17" class="ic"><path class="f" d="M0 0h18v11H0z"/><text x="1" y="10" font-size="12" style="fill:#333">VA</text><path d="M1 14.500h16M3 12.500l-2 2 2 2M15 12.500l2 2-2 2"/></svg>
      <div class="combo d-flex"><span class="spin"><button aria-label="More"></button><button aria-label="Less"></button></span><input value="0" aria-label="Tracking"><button class="drop" aria-label="Trackings"></button></div>
    </div>
    <hr>
    <div class="pgrid">
      <svg width="18" height="16" class="ic"><text x="6" y="14" font-size="17">T</text><path d="M2.500 1v13M.5 3l2-2 2 2M.5 12l2 2 2-2"/></svg>
      <div class="combo d-flex"><span class="spin"><button aria-label="More"></button><button aria-label="Less"></button></span><input value="100%" aria-label="Vertical scale"><button class="drop" aria-label="Vertical scales"></button></div><i></i>
      <svg width="18" height="17" class="ic"><text x="3" y="12" font-size="17" font-weight="700">T</text><path d="M1 14.500h16M3 12.500l-2 2 2 2M15 12.500l2 2-2 2"/></svg>
      <div class="combo d-flex"><span class="spin"><button aria-label="More"></button><button aria-label="Less"></button></span><input value="100%" aria-label="Horizontal scale"><button class="drop" aria-label="Horizontal scales"></button></div>
      <svg width="18" height="16" class="ic"><text x="0" y="12" font-size="13">A</text><text x="10" y="7" font-size="11">a</text><path d="M0 13.500h9M10 8.500h6M13.500 10v5M12 12l1.500-1.500L15 12"/></svg>
      <div class="combo d-flex"><span class="spin"><button aria-label="More"></button><button aria-label="Less"></button></span><input value="0 pt" aria-label="Baseline shift"><button class="drop" aria-label="Shifts"></button></div><i></i>
      <svg width="18" height="18" class="ic"><path d="M12 2a7.500 7.500 0 1 1-6 0M3 1.500h4v4"/><path d="M12 2a7.500 7.500 0 0 1 4 9"/><text x="5" y="13" font-size="12" font-weight="700">T</text></svg>
      <div class="combo d-flex"><span class="spin"><button aria-label="More"></button><button aria-label="Less"></button></span><input value="0°" aria-label="Rotation"><button class="drop" aria-label="Rotations"></button></div>
    </div>
    <hr>
    <div class="typebtns d-flex align-items-center">
      <button aria-label="All caps"><svg width="30" height="15" class="ic"><text x="0" y="12" font-size="15">TT</text></svg></button>
      <button aria-label="Small caps"><svg width="55" height="15" class="ic"><text x="1" y="12" font-size="15">T</text><text x="10" y="12" font-size="11">T</text></svg></button>
      <button aria-label="Superscript"><svg width="30" height="15" class="ic"><text x="1" y="12" font-size="15">T</text><text x="11" y="7" font-size="9">1</text></svg></button>
      <button aria-label="Subscript"><svg width="53" height="15" class="ic"><text x="1" y="12" font-size="15">T</text><text x="11" y="14" font-size="9">1</text></svg></button>
      <button aria-label="Underline"><svg width="30" height="15" class="ic"><text x="3" y="12" font-size="15">T</text><path d="M2 14.500h11"/></svg></button>
      <button aria-label="Strikethrough"><svg width="14" height="15" class="ic"><text x="2" y="12" font-size="15">T</text><path d="M1 7.500h11"/></svg></button>
    </div>
    <hr>
    <div class="d-flex align-items-center" style="padding-top:7px">
      <label class="pick" style="width:101px"><select aria-label="Language"><option>English: USA</option></select></label>
      <svg width="37" height="18" class="ic"><text x="15" y="10" font-size="12">a</text><text x="21" y="14" font-size="14">a</text></svg>
      <label class="pick" style="width:80px"><select aria-label="Anti-aliasing"><option>Sharp</option></select></label>
    </div>
  </div>
 </div>
</section>
</div>
<script src="https://cdn.jsdelivr.net/npm/bootstrap@5.3.0/dist/js/bootstrap.bundle.min.js"></script>
</body>
</html>
